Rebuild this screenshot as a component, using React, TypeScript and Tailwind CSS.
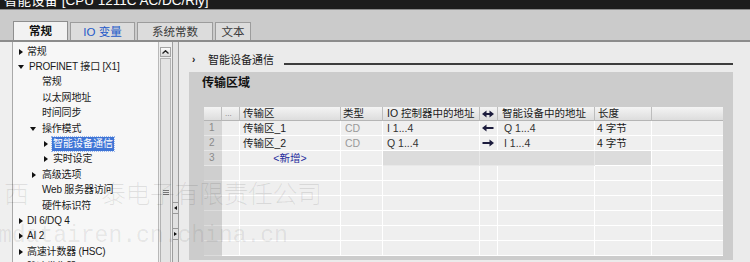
import React from 'react';

const FONT = "font-['Liberation_Sans','Noto_Sans_CJK_SC',sans-serif]";

interface TreeItem {
  label: string;
  pad: string;
  box: string;
  arrow: 'right' | 'down' | null;
  selected?: boolean;
}

const treeItems: TreeItem[] = [
  { label: '常规', pad: 'pl-[6px]', box: 'w-[8px]', arrow: 'right' },
  { label: 'PROFINET 接口 [X1]', pad: 'pl-[5px]', box: 'w-[11px]', arrow: 'down' },
  { label: '常规', pad: 'pl-[18px]', box: 'w-[11px]', arrow: null },
  { label: '以太网地址', pad: 'pl-[18px]', box: 'w-[11px]', arrow: null },
  { label: '时间同步', pad: 'pl-[18px]', box: 'w-[11px]', arrow: null },
  { label: '操作模式', pad: 'pl-[17px]', box: 'w-[12px]', arrow: 'down' },
  { label: '智能设备通信', pad: 'pl-[31px]', box: 'w-[8px]', arrow: 'right', selected: true },
  { label: '实时设定', pad: 'pl-[31px]', box: 'w-[9px]', arrow: 'right' },
  { label: '高级选项', pad: 'pl-[19px]', box: 'w-[10px]', arrow: 'right' },
  { label: 'Web 服务器访问', pad: 'pl-[18px]', box: 'w-[11px]', arrow: null },
  { label: '硬件标识符', pad: 'pl-[18px]', box: 'w-[11px]', arrow: null },
  { label: 'DI 6/DQ 4', pad: 'pl-[6px]', box: 'w-[8px]', arrow: 'right' },
  { label: 'AI 2', pad: 'pl-[6px]', box: 'w-[8px]', arrow: 'right' },
  { label: '高速计数器 (HSC)', pad: 'pl-[6px]', box: 'w-[8px]', arrow: 'right' },
  { label: '脉冲发生器 (PTO/PWM)', pad: 'pl-[6px]', box: 'w-[8px]', arrow: 'right' },
];

const Arrow = ({ dir }: { dir: 'left' | 'right' | 'both' }) => (
  <svg width="12" height="8" viewBox="0 0 12 8" className="block">
    {dir !== 'right' && <polygon points="0,4 4.5,0.5 4.5,7.5" fill="#1b1b3c" />}
    {dir !== 'left' && <polygon points="12,4 7.5,0.5 7.5,7.5" fill="#1b1b3c" />}
    <rect x={dir === 'right' ? 0.5 : 4} y="3" width={dir === 'both' ? 4 : 7.5} height="2" fill="#1b1b3c" />
  </svg>
);

const COLS = 'grid grid-cols-[18px_18px_101px_42px_97px_18px_97px_57px_71px]';

const DataRow = ({ n, name, type, ctrl, dir, dev, len }: { n: string; name: string; type: string; ctrl: string; dir: 'left' | 'right'; dev: string; len: string }) => (
  <div className={`${COLS} h-[15px] text-[10.5px] leading-[14px]`}>
    <div className="bg-[#d6d6d6] border-b border-[#e6e6e6] pl-[5px] text-[10px] text-[#8a8a8a]">{n}</div>
    <div className="bg-[#efefef] border-r border-b border-white" />
    <div className="bg-[#efefef] border-r border-b border-white pl-[3px] text-[#1a1a1a]">{name}</div>
    <div className="bg-[#efefef] border-r border-b border-white pl-[4px] text-[#9a9a9a]">{type}</div>
    <div className="bg-[#efefef] border-r border-b border-white pl-[4px] text-[#333]">{ctrl}</div>
    <div className="bg-[#efefef] border-r border-b border-white flex items-center pl-[2px]"><Arrow dir={dir} /></div>
    <div className="bg-[#efefef] border-r border-b border-white pl-[6px] text-[#333]">{dev}</div>
    <div className="bg-[#efefef] border-r border-b border-white pl-[2px] text-[#1a1a1a]">{len}</div>
    <div className="bg-[#efefef] border-b border-white" />
  </div>
);

const EmptyRow = () => (
  <div className={`${COLS} h-[15px]`}>
    <div className="bg-[#cfcfcf] border-b border-[#dcdcdc]" />
    <div className="bg-[#efefef] border-r border-b border-white" />
    <div className="bg-[#efefef] border-r border-b border-white" />
    <div className="bg-[#efefef] border-r border-b border-white" />
    <div className="bg-[#efefef] border-r border-b border-white" />
    <div className="bg-[#efefef] border-r border-b border-white" />
    <div className="bg-[#efefef] border-r border-b border-white" />
    <div className="bg-[#efefef] border-r border-b border-white" />
    <div className="bg-[#efefef] border-b border-white" />
  </div>
);

const HeadCell = ({ children, className }: { children?: React.ReactNode; className?: string }) => (
  <div className={`bg-gradient-to-b from-[#f4f4f4] to-[#dddddd] border-r border-[#bdbdbd] border-b border-b-[#b5b5b5] ${className ?? ''}`}>
    {children}
  </div>
);

export default function App() {
  return (
    <div className={`relative w-[750px] h-[262px] overflow-hidden bg-[#ebebeb] ${FONT}`}>
      {/* title bar */}
      <div className="h-[10px] bg-[#1c1c1c] overflow-hidden border-b border-[#8a8a8a]">
        <div className="-mt-[6px] pl-[4px] text-[13.5px] leading-[14px] text-white">智能设备 [CPU 1211C AC/DC/Rly]</div>
      </div>

      {/* tabs */}
      <div className="h-[32px] bg-[#cbcbcb] border-b-2 border-b-[#8c8c8c] flex items-end pl-[13px] gap-[2px] text-[11.5px] leading-[16px]">
        <div className="w-[55px] h-[19px] bg-[#f2f2f2] border border-b-0 border-[#8e8e8e] flex items-center justify-center font-bold text-[#111]">常规</div>
        <div className="w-[65px] h-[18px] bg-[#dcdcdc] border border-b-0 border-[#9c9c9c] flex items-center justify-center text-[#2459c9]">IO 变量</div>
        <div className="w-[76px] h-[18px] bg-[#dcdcdc] border border-b-0 border-[#9c9c9c] flex items-center justify-center text-[#3a3a3a]">系统常数</div>
        <div className="w-[36px] h-[18px] bg-[#dcdcdc] border border-b-0 border-[#9c9c9c] flex items-center justify-center text-[#3a3a3a]">文本</div>
      </div>

      {/* body */}
      <div className="flex h-[220px]">
        {/* left navigation */}
        <div className="w-[13px] bg-[#efefef] border-r border-[#a9a9a9]" />
        <div className="w-[145px] bg-[#f7f7f7] pt-[2px] text-[10px] leading-[14px] text-[#1a1a1a]">
          {treeItems.map((it, i) => (
            <div key={i} className={`h-[15.4px] flex items-center whitespace-nowrap ${it.pad}`}>
              <div className={`${it.box} flex items-center shrink-0`}>
                {it.arrow === 'right' && (
                  <div className="w-0 h-0 border-y-[3.5px] border-y-transparent border-l-[4px] border-l-[#111]" />
                )}
                {it.arrow === 'down' && (
                  <div className="w-0 h-0 border-x-[3.5px] border-x-transparent border-t-[4px] border-t-[#111]" />
                )}
              </div>
              {it.selected ? (
                <span className="bg-[#3f75d6] text-white px-[1px] outline outline-1 outline-dotted outline-[#9bb7ea]">{it.label}</span>
              ) : (
                <span className="tracking-[-0.2px]">{it.label}</span>
              )}
            </div>
          ))}
        </div>

        {/* scrollbar */}
        <div className="w-[14px] bg-[#ededed] border-l border-[#b8b8b8] pl-[1px] pt-[5px] flex flex-col">
          <div className="w-[11px] h-[10px] bg-gradient-to-b from-[#fafafa] to-[#dadada] border border-[#a3a3a3] flex items-center justify-center">
            <svg width="7" height="4" viewBox="0 0 7 4"><path d="M0.5 3.5 L3.5 0.7 L6.5 3.5" stroke="#222" strokeWidth="1.3" fill="none" /></svg>
          </div>
          <div className="w-[11px] flex-1 mt-[1px] bg-[#e4e4e4] border border-b-0 border-[#b3b3b3] flex flex-col items-center pt-[131px] gap-[1px]">
            <div className="w-[6px] h-px bg-[#777]" />
            <div className="w-[6px] h-px bg-[#777]" />
            <div className="w-[6px] h-px bg-[#777]" />
          </div>
        </div>

        {/* splitter */}
        <div className="w-[7px] bg-[#e2e2e2] border-x border-[#9d9d9d] flex flex-col items-center pt-[160px]">
          <div className="w-[5px] h-[12px] border-y border-[#9a9a9a] flex items-center justify-center">
            <div className="w-0 h-0 border-y-[2.5px] border-y-transparent border-r-[3px] border-r-[#111]" />
          </div>
          <div className="w-[5px] h-[12px] mt-[14px] border-y border-[#9a9a9a] flex items-center justify-center">
            <div className="w-0 h-0 border-y-[2.5px] border-y-transparent border-l-[3px] border-l-[#111]" />
          </div>
        </div>

        {/* right content */}
        <div className="flex-1 bg-[#ebebeb] pt-[12px] flex flex-col">
          <div className="h-[12px] flex items-center pl-[13px] pr-[17px]">
            <span className="w-[16px] text-[10px] leading-[12px] font-bold text-[#222]">›</span>
            <span className="text-[11px] leading-[12px] text-[#1a1a1a] whitespace-nowrap">智能设备通信</span>
            <div className="flex-1 ml-[10px] mt-[8px] h-[2px] bg-[#3c3c3c]" />
          </div>

          <div className="mt-[6px] ml-[10px] mr-[17px] h-[188px] bg-[#cccccc] pt-[4px]">
            <div className="pl-[13px] text-[12px] leading-[14px] font-bold text-[#111]">传输区域</div>

            <div className="mt-[17px] ml-[15px] w-[519px]">
              <div className={`${COLS} h-[14px] text-[10.5px] leading-[13px] text-[#1a1a1a]`}>
                <HeadCell />
                <HeadCell className="pl-[3px] text-[8px] text-[#777]">...</HeadCell>
                <HeadCell className="pl-[3px]">传输区</HeadCell>
                <HeadCell className="pl-[2px]">类型</HeadCell>
                <HeadCell className="pl-[4px] whitespace-nowrap">IO 控制器中的地址</HeadCell>
                <HeadCell className="flex items-center pl-[2px]"><Arrow dir="both" /></HeadCell>
                <HeadCell className="pl-[4px] whitespace-nowrap">智能设备中的地址</HeadCell>
                <HeadCell className="pl-[3px]">长度</HeadCell>
                <HeadCell className="border-r-0" />
              </div>

              <DataRow n="1" name="传输区_1" type="CD" ctrl="I 1...4" dir="left" dev="Q 1...4" len="4 字节" />
              <DataRow n="2" name="传输区_2" type="CD" ctrl="Q 1...4" dir="right" dev="I 1...4" len="4 字节" />

              <div className={`${COLS} h-[15px] text-[10.5px] leading-[14px]`}>
                <div className="bg-[#d6d6d6] border-b border-[#e6e6e6] pl-[5px] text-[10px] text-[#8a8a8a]">3</div>
                <div className="bg-[#efefef] border-r border-b border-white" />
                <div className="bg-[#efefef] border-r border-b border-white text-center text-[#1e2a9c]">&lt;新增&gt;</div>
                <div className="bg-[#efefef] border-r border-b border-white" />
                <div className="bg-[#dcdcdc] border-r border-b border-[#e8e8e8]" />
                <div className="bg-[#dcdcdc] border-b border-[#e8e8e8]" />
                <div className="bg-[#dcdcdc] border-r border-b border-[#e8e8e8]" />
                <div className="bg-[#dcdcdc] border-r border-b border-white" />
                <div className="bg-[#efefef] border-b border-white" />
              </div>

              <EmptyRow />
              <EmptyRow />
              <EmptyRow />
              <EmptyRow />
              <EmptyRow />
              <EmptyRow />
            </div>
          </div>
        </div>
      </div>

      {/* watermark */}
      <div className="absolute left-[4px] top-[177px] flex text-[25px] leading-[30px] text-black/[0.09] font-['Noto_Sans_CJK_SC',sans-serif] font-light pointer-events-none whitespace-nowrap">
        <span>西</span>
        <span className="ml-[72px] tracking-[-0.5px]">泰电子有限责任公司</span>
      </div>
      <div className="absolute left-[-2px] top-[222px] text-[23px] leading-[28px] text-black/[0.08] font-['Liberation_Mono',monospace] pointer-events-none whitespace-nowrap">
        mdatairen.cn.china.cn
      </div>
    </div>
  );
}
